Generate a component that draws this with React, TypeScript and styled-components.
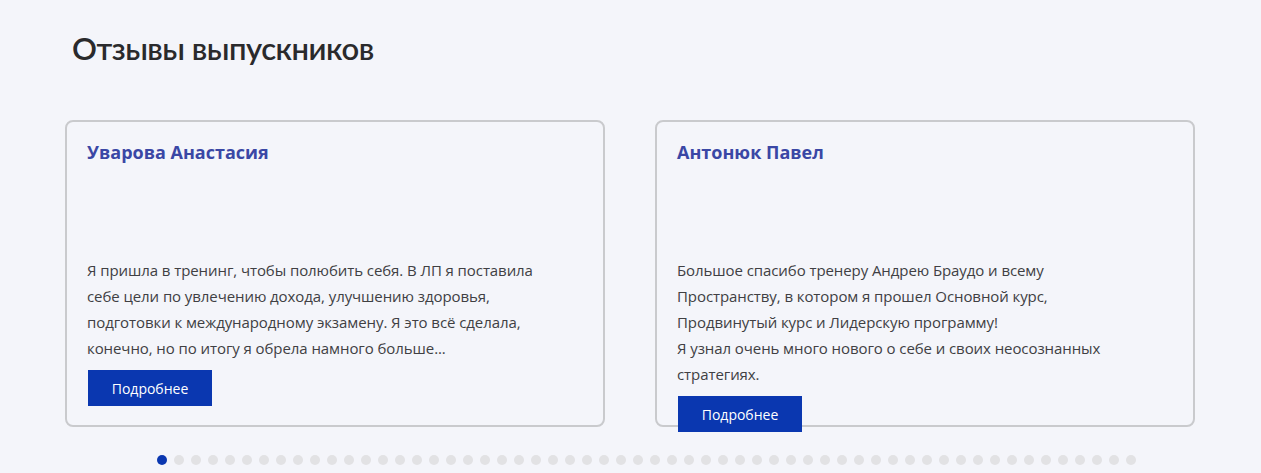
import React from "react";
import styled, { createGlobalStyle } from "styled-components";

const GlobalStyle = createGlobalStyle`
  body {
    margin: 0;
    background: #f4f5fa;
    font-family: "Open Sans", "Noto Sans", sans-serif;
  }
`;

type Review = {
  name: string;
  lines: string[];
};

const reviews: Review[] = [
  {
    name: "Уварова Анастасия",
    lines: [
      "Я пришла в тренинг, чтобы полюбить себя. В ЛП я поставила",
      "себе цели по увлечению дохода, улучшению здоровья,",
      "подготовки к международному экзамену. Я это всё сделала,",
      "конечно, но по итогу я обрела намного больше...",
    ],
  },
  {
    name: "Антонюк Павел",
    lines: [
      "Большое спасибо тренеру Андрею Браудо и всему",
      "Пространству, в котором я прошел Основной курс,",
      "Продвинутый курс и Лидерскую программу!",
      "Я узнал очень много нового о себе и своих неосознанных",
      "стратегиях.",
    ],
  },
];

const DOTS = 58;

const Section = styled.section`
  padding: 30px 66px 0 65px;
`;

const Title = styled.h2`
  margin: 0 0 0 7px;
  font-family: "Lato", "Open Sans", sans-serif;
  font-weight: 600;
  font-size: 31px;
  line-height: 37px;
  letter-spacing: -0.5px;
  color: #2a2a2c;
`;

const Cards = styled.div`
  display: grid;
  grid-template-columns: 1fr 1fr;
  gap: 50px;
  margin-top: 53px;
`;

const Card = styled.article`
  box-sizing: border-box;
  height: 307px;
  padding: 18px 20px 0;
  border: 2px solid #c9cacd;
  border-radius: 8px;
`;

const Name = styled.h3`
  margin: 0;
  min-height: 117px;
  font-size: 18px;
  line-height: 24px;
  font-weight: 700;
  color: #3a47a5;
`;

const Text = styled.p`
  margin: 0;
  font-size: 15px;
  line-height: 26px;
  letter-spacing: -0.08px;
  color: #404043;
`;

const MoreButton = styled.button`
  display: block;
  width: 124px;
  height: 36px;
  margin: 9px 0 0 1px;
  padding: 0;
  border: 0;
  background: #0a37b0;
  color: #fff;
  font-family: "Open Sans", sans-serif;
  font-size: 14px;
  font-weight: 500;
  cursor: pointer;
`;

const Dots = styled.div`
  display: flex;
  gap: 7px;
  margin: 28px 0 0 92px;
`;

const Dot = styled.span<{ $active?: boolean }>`
  width: 10px;
  height: 10px;
  border-radius: 50%;
  background: ${(p) => (p.$active ? "#0a37b0" : "#e2e2e4")};
`;

const App = () => {
  return (
    <>
      <GlobalStyle />
      <Section>
        <Title>Отзывы выпускников</Title>
        <Cards>
          {reviews.map((r) => (
            <Card key={r.name}>
              <Name>{r.name}</Name>
              <Text>
                {r.lines.map((line, i) => (
                  <React.Fragment key={i}>
                    {i > 0 && <br />}
                    {line}
                  </React.Fragment>
                ))}
              </Text>
              <MoreButton>Подробнее</MoreButton>
            </Card>
          ))}
        </Cards>
        <Dots>
          {Array.from({ length: DOTS }, (_, i) => (
            <Dot key={i} $active={i === 0} />
          ))}
        </Dots>
      </Section>
    </>
  );
};

export default App;
